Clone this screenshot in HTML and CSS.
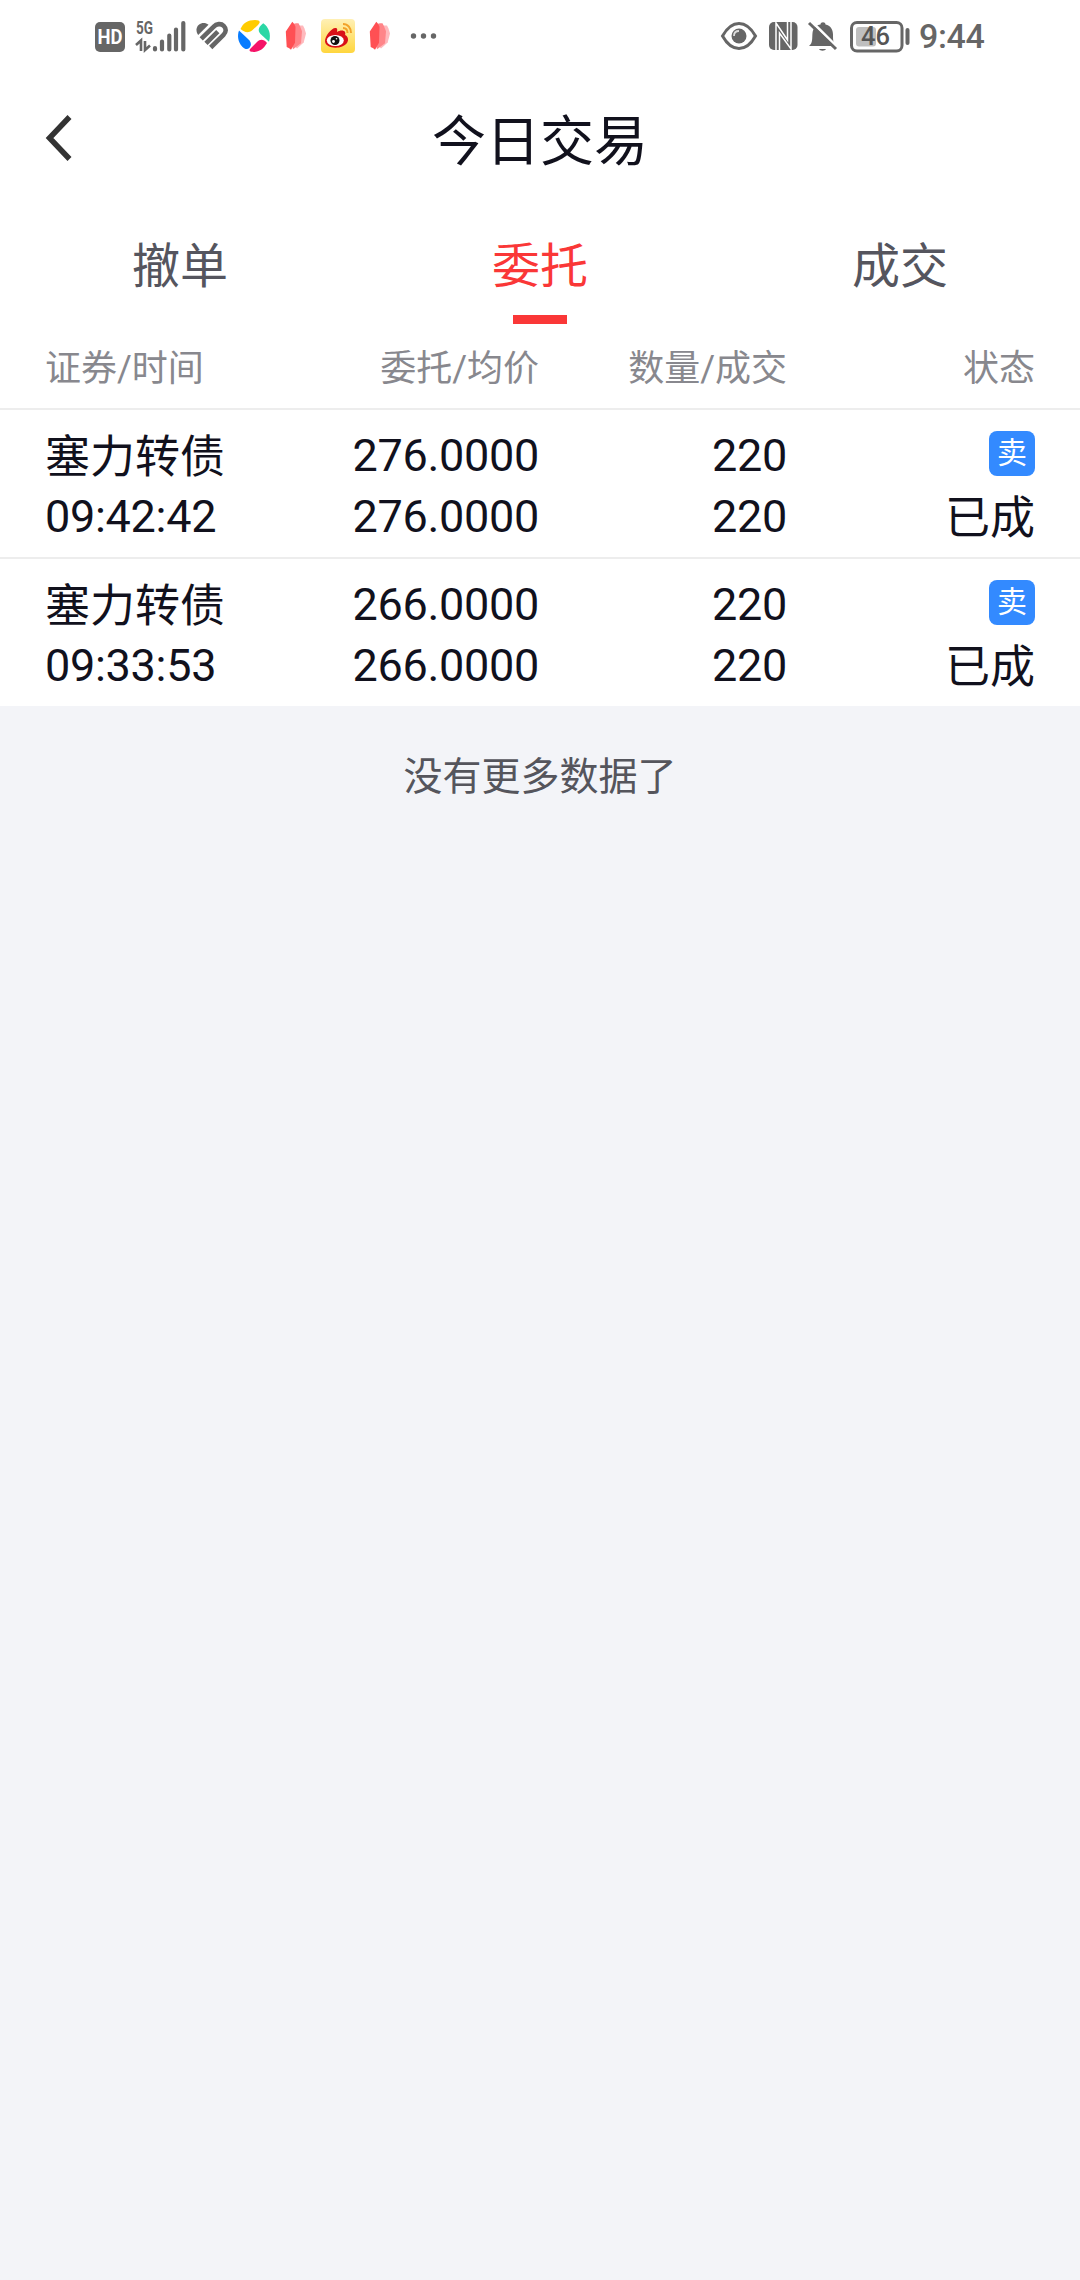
FILE: index.html
```html
<!DOCTYPE html>
<html lang="zh-CN">
<head>
<meta charset="utf-8">
<title>今日交易</title>
<link rel="stylesheet" href="styles.css">
</head>
<body>
<svg class="defs" width="0" height="0" aria-hidden="true">
  <symbol id="petals" viewBox="0 0 22 36">
    <path d="M12 7.500l6 0 1.500 3 1.500 5-2.300 9-6.700 6-2-2z" fill="#ffb9bd"/>
    <path d="M8 6l3-.7h2.500l1.500 3 2 5-1 12-8 6-1-4z" fill="#ff8589"/>
    <path d="M7.300 3.700l1.700 2 1.500 3-.5 16-4 7-1.800-1.500-2.500-1.200L.8 13.500z" fill="#ff5054"/>
  </symbol>
</svg>
<div class="status-bar">
  <div class="status-left">
    <svg width="30" height="36" viewBox="0 0 30 36"><rect y="4" width="30" height="30" rx="5" fill="#666"/><text x="15" y="26" class="hd" textLength="25" lengthAdjust="spacingAndGlyphs">HD</text></svg>
    <svg class="signal" width="52" height="36" viewBox="0 0 52 36"><text x="1" y="16" class="net" textLength="17" lengthAdjust="spacingAndGlyphs">5G</text>
      <path d="M1 27l5-4.500v10.500M10 23v9l5-4.500" fill="none" stroke="#666" stroke-width="2.600"/>
      <path d="M20 30v1.500M27 23.500v8M34.300 17.500v14M41 11.500v20M48.300 5v26.500" stroke="#666" stroke-width="4.200" stroke-linecap="round"/></svg>
    <svg class="heart" width="34" height="36" viewBox="0 0 34 36"><path d="M13.500 6.800C9.500 3.300 2 5 1.500 11.500c-.1 2 .5 4 1.700 5.500z" fill="#666"/><path d="M6.200 20.800L18.500 8.800c3-3.100 7.500-3.600 10.200-1 2.800 2.700 2.600 6.200-.2 9L15.700 29.500M11 25.300L22.800 13.700" fill="none" stroke="#666" stroke-width="4.600"/></svg>
    <svg class="pinwheel" width="34" height="36" viewBox="0 0 34 36"><path d="M3.500 11C6 5 11 2 18 2c5 0 6 2 3 5l-6 5.500C11 15.500 7 14 3.500 11z" fill="#fc0"/><path d="M26.300 5.300C31.500 9 34.500 16 32 23.800L23.500 16c-3.500-3.500-1.500-7.500 2.800-10.700z" fill="#2bd7a5"/><path d="M30 25c-4 7-9 9.500-15.500 8.800-2.500-.3-2.500-2-.5-3.800l6-6c3.500-3.500 7-2.500 10 1z" fill="#f51468"/><path d="M2 12.500l9.500 9c3 3 3 6 .8 8.500-2 1.800-4.500 1.300-7-1.300C1 24 0 18 2 12.500z" fill="#087cff"/></svg>
    <svg class="petal" width="22" height="36"><use href="#petals"/></svg>
    <svg class="weibo" width="34" height="36" viewBox="0 0 34 36"><defs><linearGradient id="gold" x2="0" y2="1"><stop stop-color="#fff0b5"/><stop offset="1" stop-color="#ffd63e"/></linearGradient></defs><rect y="1" width="34" height="34" rx="4" fill="url(#gold)"/><path d="M4 23c0-5 7-14 11-13 2 .6 1 3 1 4 3-2 7-2 8 0 .6 1 .2 3 0 3 3 1 4 5 2 8-5 7-22 6-22-2z" fill="#d91018"/><ellipse cx="14.300" cy="22.500" rx="8.500" ry="5.500" fill="#fff"/><circle cx="14" cy="22.500" r="4.500" fill="#111"/><circle cx="12.500" cy="23.500" r="1.400" fill="#fff"/><circle cx="15.500" cy="20.800" r=".8" fill="#fff"/><path d="M22 6c5 0 8 4 8 9M22 10c3 0 4.500 2 4.500 5" fill="none" stroke="#f2a229" stroke-width="2"/></svg>
    <svg class="petal" width="22" height="36"><use href="#petals"/></svg>
    <svg class="dots" width="27" height="36" viewBox="0 0 27 36" fill="#666"><circle cx="3.500" cy="18" r="2.700"/><circle cx="13.500" cy="18" r="2.700"/><circle cx="23.500" cy="18" r="2.700"/></svg>
  </div>
  <div class="status-right">
    <svg width="38" height="36" viewBox="0 0 38 36"><path d="M2.500 18C7 10 12 5.500 19 5.500S31 10 35.500 18C31 26 26 30.500 19 30.500S7 26 2.500 18z" fill="none" stroke="#666" stroke-width="3"/><circle cx="19" cy="18" r="7.500" fill="#666"/><path d="M14 18c0-3 2-5 5-5" fill="none" stroke="#ddd" stroke-width="1.800"/></svg>
    <svg class="nfc" width="29" height="36" viewBox="0 0 29 36"><rect y="4" width="28.500" height="28" rx="5" fill="#666"/><path d="M7 32.500V5l11.500 17V3.500M10.500 32.500V15L22 31V3.500" fill="none" stroke="#fff" stroke-width="1.500"/></svg>
    <svg class="bell" width="30" height="36" viewBox="0 0 30 36"><path d="M1 28c4-3 3-8 3.500-13 .5-5 4-8 8-8.500 0-3 5-3 5 0 5 1 7.500 5 7.500 10 0 6 0 8 3 11.500z" fill="#666"/><path d="M11 31h7c-1 2.300-6 2.300-7 0z" fill="#666"/><path d="M3 3l27 27" stroke="#fff" stroke-width="3"/><path d="M1 5l27 26" stroke="#666" stroke-width="3"/></svg>
    <svg class="battery" width="60" height="36" viewBox="0 0 60 36"><rect x="1.500" y="4.500" width="50.500" height="28.500" rx="5.500" fill="none" stroke="#666" stroke-width="3"/><rect x="6" y="9" width="20" height="19.500" rx="3" fill="#bfbfbf"/><text x="11" y="27" class="charge" textLength="29" lengthAdjust="spacingAndGlyphs">46</text><path d="M57.500 12v13" stroke="#666" stroke-width="4" stroke-linecap="round"/></svg>
    <span class="clock">9:44</span>
  </div>
</div>
<header class="nav">
  <svg class="back" width="30" height="50" viewBox="0 0 30 50"><path d="M26.500 4L6.500 25l20 21" fill="none" stroke="#333" stroke-width="5.500"/></svg>
  <h1>今日交易</h1>
</header>
<nav class="tabs">
  <div class="tab">撤单</div>
  <div class="tab active">委托</div>
  <div class="tab">成交</div>
</nav>
<main>
  <div class="columns head">
    <span>证券/时间</span><span>委托/均价</span><span>数量/成交</span><span>状态</span>
  </div>
  <div class="columns order">
    <div class="stock"><span>塞力转债</span><span class="num">09:42:42</span></div>
    <div class="num">276.0000<br>276.0000</div>
    <div class="num">220<br>220</div>
    <div class="state"><span class="badge">卖</span><span>已成</span></div>
  </div>
  <div class="columns order">
    <div class="stock"><span>塞力转债</span><span class="num">09:33:53</span></div>
    <div class="num">266.0000<br>266.0000</div>
    <div class="num">220<br>220</div>
    <div class="state"><span class="badge">卖</span><span>已成</span></div>
  </div>
</main>
<p class="end">没有更多数据了</p>
</body>
</html>
```
FILE: styles.css
```css
* { box-sizing: border-box; }
body {
  margin: 0;
  min-height: 2280px;
  background: #f3f4f8;
  color: #11111d;
  font-family: Roboto, "Noto Sans CJK SC", sans-serif;
}
svg { display: block; flex: none; overflow: visible; }
.defs { display: none; }
.status-bar {
  display: flex;
  justify-content: space-between;
  height: 72px;
  padding: 18px 92px 0 95px;
  background: #fff;
  color: #666;
}
.status-left, .status-right { display: flex; height: 36px; }
.signal { margin-left: 10px; }
.heart { margin-left: 8px; }
.pinwheel { margin-left: 8px; }
.petal { margin-left: 14px; }
.weibo { margin-left: 14px; }
.dots { margin-left: 19px; }
.hd { font: 700 20px Roboto, sans-serif; fill: #fff; text-anchor: middle; }
.net { font: 700 18px Roboto, sans-serif; fill: #666; }
.charge { font: 500 25px Roboto, sans-serif; fill: #555; }
.status-right { width: 268px; }
.nfc { margin-left: 11px; }
.bell { margin-left: 10px; }
.battery { margin-left: 12px; }
.clock {
  margin-left: 9px;
  font-size: 34px;
  line-height: 37px;
  font-weight: 500;
  letter-spacing: -0.4px;
}
.nav {
  display: grid;
  grid-template-columns: 45px 1fr 45px;
  align-items: center;
  height: 138px;
  padding: 0 43px;
  background: #fff;
}
.nav .back { margin-bottom: 7px; }
h1 { margin: 0; padding-top: 4px; font-size: 54px; line-height: 78px; font-weight: 400; text-align: center; }
.tabs { display: grid; grid-template-columns: repeat(3, 1fr); height: 114px; background: #fff; }
.tab {
  display: flex;
  flex-direction: column;
  align-items: center;
  padding-top: 22px;
  color: #55555e;
  font-size: 48px;
  line-height: 70px;
}
.active { color: #fa3737; }
.active::after { content: ""; width: 54px; height: 9px; margin-top: 13px; background: #fa3737; }
.columns {
  display: grid;
  grid-template-columns: 245px 249px 248px 248px;
  padding: 0 45px;
  background: #fff;
  border-bottom: 2px solid #ededed;
  text-align: right;
}
.columns > :first-child { text-align: left; }
.head { height: 86px; padding-top: 18px; color: #88888e; font-size: 36px; line-height: 54px; }
.order { height: 149px; padding-top: 15px; font-size: 45px; line-height: 61px; }
.order:last-child { height: 147px; border-bottom: 0; }
.num { letter-spacing: -0.3px; }
.stock { display: flex; flex-direction: column; }
.stock > :first-child { height: 61px; padding-top: 2px; }
.state { display: flex; flex-direction: column; align-items: flex-end; }
.badge {
  width: 46px;
  height: 45px;
  margin: 6px 0 12px;
  border-radius: 8px;
  background: #338aff;
  color: #fff;
  font-size: 30px;
  line-height: 43px;
  text-align: center;
}
.end { margin: 41px 0 0; color: #55555c; font-size: 39px; line-height: 60px; text-align: center; }
```
